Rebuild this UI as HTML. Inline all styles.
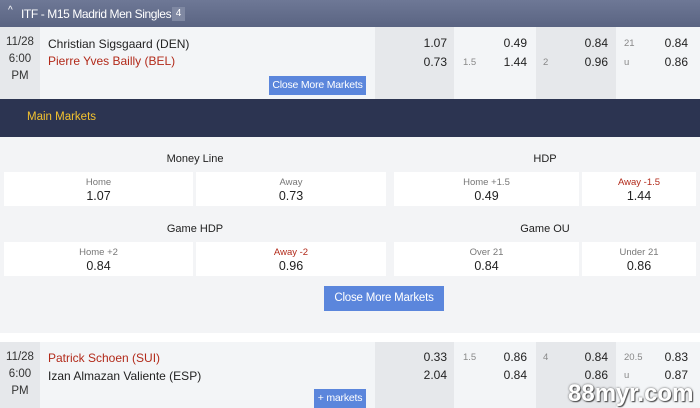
<!DOCTYPE html><html><head><style>
*{margin:0;padding:0;box-sizing:border-box}
body{width:700px;height:408px;overflow:hidden;font-family:"Liberation Sans",sans-serif;background:#f3f4f6;position:relative;font-size:12px;color:#222}
.a{position:absolute;white-space:nowrap}
.hdr{left:0;top:0;width:700px;height:27px;background:linear-gradient(#6e7896,#5a6482);color:#fff;font-size:12px}
.row{left:0;width:700px;height:72px;background:#f3f5f7}
.date{left:0;top:0;width:40px;height:100%;background:#e6e8eb;text-align:center;font-size:11.5px;line-height:17px;padding-top:7px;color:#333}
.c{top:0;height:100%;background:#f3f5f7}
.d{background:#e6e8eb}
.n{font-size:12px;color:#222;text-align:right}
.l{font-size:9.5px;color:#888}
.btn{background:#5b86dc;color:#fff;font-size:10.5px;text-align:center;letter-spacing:-0.2px}
.box{background:#fff;text-align:center;height:34px}
.box .t{font-size:9.5px;color:#777;margin-top:5px}
.box .v{font-size:12.5px;color:#222;margin-top:1px}
.ttl{font-size:11px;text-align:center;color:#222}
</style></head><body>
<div class="a hdr"><span class="a" style="left:8px;top:5px;font-size:10px">^</span><span class="a" style="left:21px;top:7px;letter-spacing:-0.4px">ITF - M15 Madrid Men Singles</span><span class="a" style="left:172px;top:7px;width:13px;height:14px;background:#7f88a2;font-size:10px;text-align:center;line-height:14px">4</span></div>

<div class="a row" style="top:27px">
<div class="a date">11/28<br>6:00<br>PM</div>
<div class="a" style="left:48px;top:10px;font-size:12px">Christian Sigsgaard (DEN)</div>
<div class="a" style="left:48px;top:27px;font-size:12px;color:#b22a1a">Pierre Yves Bailly (BEL)</div>
<div class="a btn" style="left:269px;top:49px;width:97px;height:19px;line-height:19px">Close More Markets</div>
<div class="a c d" style="left:375px;width:79px"></div>
<div class="a c" style="left:454px;width:82px"></div>
<div class="a c d" style="left:536px;width:80px"></div>
<div class="a c" style="left:616px;width:81px"></div>
<div class="a n" style="left:400px;width:47px;top:9px">1.07</div>
<div class="a n" style="left:400px;width:47px;top:28px">0.73</div>
<div class="a n" style="left:480px;width:47px;top:9px">0.49</div>
<div class="a l" style="left:463px;top:30px">1.5</div>
<div class="a n" style="left:480px;width:47px;top:28px">1.44</div>
<div class="a n" style="left:561px;width:47px;top:9px">0.84</div>
<div class="a l" style="left:543px;top:30px">2</div>
<div class="a n" style="left:561px;width:47px;top:28px">0.96</div>
<div class="a l" style="left:624px;top:11px">21</div>
<div class="a n" style="left:641px;width:47px;top:9px">0.84</div>
<div class="a l" style="left:624px;top:30px">u</div>
<div class="a n" style="left:641px;width:47px;top:28px">0.86</div>
</div>

<div class="a" style="left:0;top:99px;width:700px;height:38px;background:#2c3451"><span class="a" style="left:27px;top:12px;color:#f3c22f;font-size:11.5px">Main Markets</span></div>

<div class="a ttl" style="left:4px;width:382px;top:153px">Money Line</div>
<div class="a ttl" style="left:394px;width:302px;top:153px">HDP</div>
<div class="a box" style="left:4px;top:172px;width:189px"><div class="t">Home</div><div class="v">1.07</div></div>
<div class="a box" style="left:196px;top:172px;width:190px"><div class="t">Away</div><div class="v">0.73</div></div>
<div class="a box" style="left:394px;top:172px;width:185px"><div class="t">Home +1.5</div><div class="v">0.49</div></div>
<div class="a box" style="left:582px;top:172px;width:114px"><div class="t" style="color:#b22a1a">Away -1.5</div><div class="v">1.44</div></div>
<div class="a ttl" style="left:4px;width:382px;top:223px">Game HDP</div>
<div class="a ttl" style="left:394px;width:302px;top:223px">Game OU</div>
<div class="a box" style="left:4px;top:242px;width:189px"><div class="t">Home +2</div><div class="v">0.84</div></div>
<div class="a box" style="left:196px;top:242px;width:190px"><div class="t" style="color:#b22a1a">Away -2</div><div class="v">0.96</div></div>
<div class="a box" style="left:394px;top:242px;width:185px"><div class="t">Over 21</div><div class="v">0.84</div></div>
<div class="a box" style="left:582px;top:242px;width:114px"><div class="t">Under 21</div><div class="v">0.86</div></div>
<div class="a btn" style="left:324px;top:286px;width:120px;height:25px;line-height:25px;font-size:11.5px">Close More Markets</div>
<div class="a" style="left:0;top:333px;width:700px;height:9px;background:#fff"></div>

<div class="a row" style="top:342px;height:66px">
<div class="a date" style="padding-top:7px">11/28<br>6:00<br>PM</div>
<div class="a" style="left:48px;top:9px;font-size:12px;color:#b22a1a">Patrick Schoen (SUI)</div>
<div class="a" style="left:48px;top:27px;font-size:12px">Izan Almazan Valiente (ESP)</div>
<div class="a btn" style="left:314px;top:47px;width:52px;height:19px;line-height:19px">+ markets</div>
<div class="a c d" style="left:375px;width:79px"></div>
<div class="a c" style="left:454px;width:82px"></div>
<div class="a c d" style="left:536px;width:80px"></div>
<div class="a c" style="left:616px;width:81px"></div>
<div class="a n" style="left:400px;width:47px;top:8px">0.33</div>
<div class="a n" style="left:400px;width:47px;top:26px">2.04</div>
<div class="a l" style="left:463px;top:10px">1.5</div>
<div class="a n" style="left:480px;width:47px;top:8px">0.86</div>
<div class="a n" style="left:480px;width:47px;top:26px">0.84</div>
<div class="a l" style="left:543px;top:10px">4</div>
<div class="a n" style="left:561px;width:47px;top:8px">0.84</div>
<div class="a n" style="left:561px;width:47px;top:26px">0.86</div>
<div class="a l" style="left:624px;top:10px">20.5</div>
<div class="a n" style="left:641px;width:47px;top:8px">0.83</div>
<div class="a l" style="left:624px;top:28px">u</div>
<div class="a n" style="left:641px;width:47px;top:26px">0.87</div>
</div>
<div class="a" style="left:568px;top:380px;font-size:24px;color:#fff;font-weight:bold;text-shadow:0 0 2px #555,1px 1px 1px #444">88myr.com</div>
</body></html>
